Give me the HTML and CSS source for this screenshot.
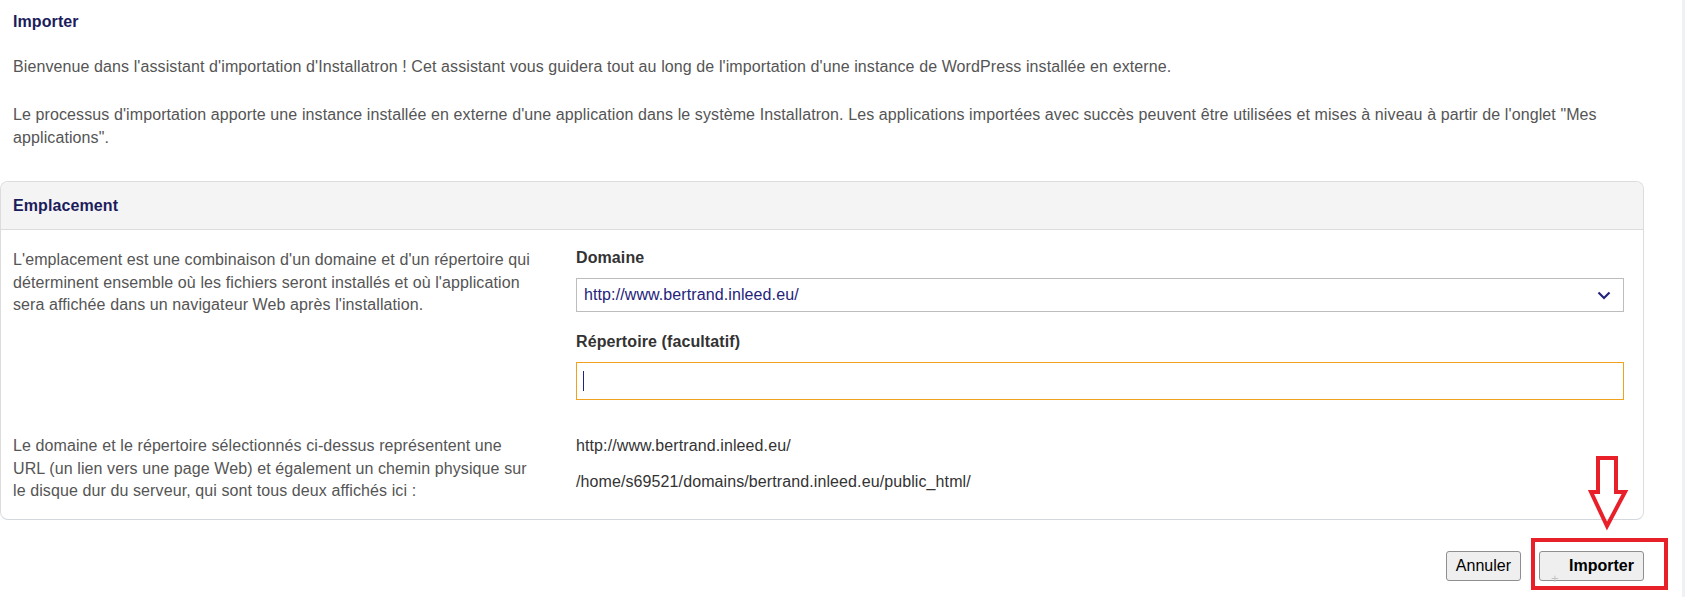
FILE: index.html
```html
<!DOCTYPE html>
<html lang="fr">
<head>
<meta charset="utf-8">
<title>Importer</title>
<link rel="stylesheet" href="styles.css">
</head>
<body>
<div class="page">
  <div class="intro">
    <div class="title">Importer</div>
    <p class="para p1">Bienvenue dans l'assistant d'importation d'Installatron ! Cet assistant vous guidera tout au long de l'importation d'une instance de WordPress installée en externe.</p>
    <p class="para p2">Le processus d'importation apporte une instance installée en externe d'une application dans le système Installatron. Les applications importées avec succès peuvent être utilisées et mises à niveau à partir de l'onglet "Mes applications".</p>
  </div>

  <div class="panel">
    <div class="panel-head">Emplacement</div>
    <div class="panel-body">
      <div class="row row-top">
        <div class="desc desc-top">L'emplacement est une combinaison d'un domaine et d'un répertoire qui déterminent ensemble où les fichiers seront installés et où l'application sera affichée dans un navigateur Web après l'installation.</div>
        <div class="fields">
          <div class="label">Domaine</div>
          <div class="select">
            <span class="select-value">http://www.bertrand.inleed.eu/</span>
            <svg class="chevron" width="14" height="9" viewBox="0 0 14 9"><path d="M1.5 1.5 L7 7 L12.5 1.5" fill="none" stroke="#24247a" stroke-width="2.2"/></svg>
          </div>
          <div class="label label-dir">Répertoire (facultatif)</div>
          <div class="input"><span class="caret"></span></div>
        </div>
      </div>
      <div class="row row-bottom">
        <div class="desc">Le domaine et le répertoire sélectionnés ci-dessus représentent une URL (un lien vers une page Web) et également un chemin physique sur le disque dur du serveur, qui sont tous deux affichés ici :</div>
        <div class="paths">
          <div class="path">http://www.bertrand.inleed.eu/</div>
          <div class="path path2">/home/s69521/domains/bertrand.inleed.eu/public_html/</div>
        </div>
      </div>
    </div>
  </div>

  <div class="actions">
    <button class="btn">Annuler</button>
    <button class="btn btn-primary">Importer<span class="plus">+</span></button>
  </div>

  <div class="annot-box"></div>
  <svg class="annot-arrow" width="44" height="76" viewBox="0 0 44 76">
    <polygon points="10,2 28,2 28,36 37,36 19,70 3,36 10,36" fill="none" stroke="#e8202a" stroke-width="4" stroke-linejoin="miter"/>
  </svg>
</div>
</body>
</html>
```

FILE: styles.css
```css
html {
  background: linear-gradient(to left, #f0f0f7 3px, #ffffff 3px);
}
body {
  margin: 0;
  font-family: "Liberation Sans", Arial, sans-serif;
  font-size: 16px;
  letter-spacing: 0.1px;
  color: #555555;
  overflow: hidden;
}
.page {
  position: relative;
  width: 1685px;
  height: 597px;
  overflow: hidden;
}
.intro {
  padding: 11px 0 0 13px;
}
.title {
  font-weight: bold;
  color: #1c1c5c;
  line-height: 22px;
}
.para {
  margin: 0;
  line-height: 23px;
  padding-right: 60px;
}
.p1 {
  margin-top: 22px;
}
.p2 {
  margin-top: 25px;
}
.panel {
  margin-top: 32px;
  width: 1642px;
  border: 1px solid #dcdcdc;
  border-bottom-color: #d3d7de;
  border-radius: 8px;
  overflow: hidden;
}
.panel-head {
  background: #f4f4f4;
  border-bottom: 1px solid #dcdcdc;
  height: 47px;
  line-height: 47px;
  padding-left: 12px;
  font-weight: bold;
  color: #1c1c5c;
}
.panel-body {
  padding: 17px 19px 16px 12px;
}
.row {
  display: grid;
  grid-template-columns: 524px 1fr;
  column-gap: 39px;
}
.row-bottom {
  margin-top: 35px;
}
.desc {
  line-height: 22.5px;
}
.desc-top {
  padding-top: 2px;
}
.label {
  font-weight: bold;
  color: #333333;
  line-height: 22px;
}
.label-dir {
  margin-top: 19px;
}
.select {
  margin-top: 9px;
  height: 32px;
  border: 1px solid #bdbdbd;
  display: flex;
  align-items: center;
  justify-content: space-between;
  padding: 0 12px 0 7px;
}
.select-value {
  color: #24247a;
}
.chevron {
  display: block;
}
.input {
  margin-top: 9px;
  height: 36px;
  border: 1px solid #f0a21c;
  display: flex;
  align-items: center;
  padding-left: 6px;
}
.caret {
  display: block;
  width: 1px;
  height: 20px;
  background: #24247a;
}
.paths {
  color: #333333;
}
.path {
  line-height: 22px;
}
.path2 {
  margin-top: 14px;
}
.actions {
  display: flex;
  justify-content: flex-end;
  gap: 18px;
  width: 1644px;
  margin-top: 31px;
}
.btn {
  position: relative;
  height: 30px;
  font-family: "Liberation Sans", Arial, sans-serif;
  font-size: 16px;
  color: #000000;
  background: #efefef;
  border: 1px solid #8f8f8f;
  border-radius: 3px;
  padding: 0 9px;
}
.btn-primary {
  width: 105px;
  font-weight: bold;
  padding: 0 9px 0 29px;
  text-align: left;
}
.plus {
  position: absolute;
  left: 11px;
  top: 20px;
  font-size: 13px;
  font-weight: normal;
  color: #c4c4c4;
  line-height: 13px;
}
.annot-box {
  position: absolute;
  left: 1531px;
  top: 538px;
  width: 129px;
  height: 44px;
  border: 4px solid #e8202a;
}
.annot-arrow {
  position: absolute;
  left: 1588px;
  top: 456px;
}
```
